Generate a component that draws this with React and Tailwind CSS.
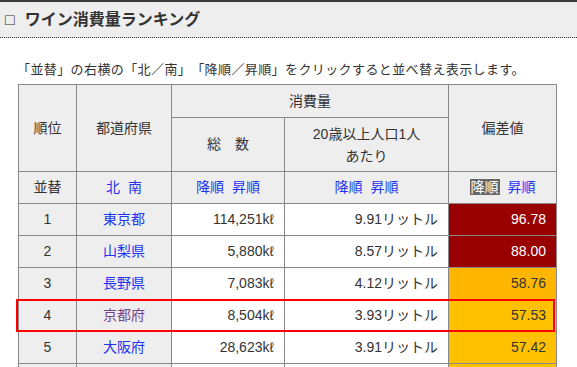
import React from "react";

const font = { fontFamily: '"Liberation Sans", "Noto Sans CJK JP", sans-serif' };

const rows = [
  { r: "1", p: "東京都", t: "114,251kℓ", a: "9.91リットル", d: "96.78", bg: "bg-[#990000] text-white" },
  { r: "2", p: "山梨県", t: "5,880kℓ", a: "8.57リットル", d: "88.00", bg: "bg-[#990000] text-white" },
  { r: "3", p: "長野県", t: "7,083kℓ", a: "4.12リットル", d: "58.76", bg: "bg-[#ffb600] text-[#333]" },
  { r: "4", p: "京都府", t: "8,504kℓ", a: "3.93リットル", d: "57.53", bg: "bg-[#ffc000] text-[#333]", visited: true },
  { r: "5", p: "大阪府", t: "28,623kℓ", a: "3.91リットル", d: "57.42", bg: "bg-[#ffc000] text-[#333]" },
];

export default function App() {
  return (
    <div className="w-[577px] h-[367px] overflow-hidden bg-white text-[#333]" style={font}>
      <div className="h-[2px] bg-[#3a3a3a]" />
      <div className="h-[36px] bg-[#eeeeee] border-b border-dotted border-[#333] flex items-center pl-[5px]">
        <span className="text-[16px] font-normal mr-[10px] leading-none">□</span>
        <span className="text-[16px] font-bold text-[#333] leading-none">ワイン消費量ランキング</span>
      </div>
      <div className="pl-[17px] pt-[22px] text-[13px] leading-[20px] h-[46px] tracking-[0.4px] [text-spacing-trim:space-all] whitespace-nowrap">
        「並替」の右横の「北／南」「降順／昇順」をクリックすると並べ替え表示します。
      </div>
      <div className="relative ml-[18px]">
        <table className="border-collapse text-[14px] table-fixed w-[539px]">
          <colgroup>
            <col className="w-[58px]" />
            <col className="w-[95px]" />
            <col className="w-[113px]" />
            <col className="w-[164px]" />
            <col className="w-[108px]" />
          </colgroup>
          <tbody>
            <tr className="h-[33px] bg-[#eeeeee]">
              <td rowSpan={2} className="border border-[#888] text-center align-middle">順位</td>
              <td rowSpan={2} className="border border-[#888] text-center align-middle">都道府県</td>
              <td colSpan={2} className="border border-[#888] text-center align-middle">消費量</td>
              <td rowSpan={2} className="border border-[#888] text-center align-middle">偏差値</td>
            </tr>
            <tr className="h-[54px] bg-[#eeeeee]">
              <td className="border border-[#888] text-center align-middle">総　数</td>
              <td className="border border-[#888] text-center align-middle leading-[22px]">
                20歳以上人口1人<br />あたり
              </td>
            </tr>
            <tr className="h-[32px] bg-[#eeeeee]">
              <td className="border border-[#888] text-center">並替</td>
              <td className="border border-[#888] text-center text-[#2233ee]">北&nbsp;&nbsp;南</td>
              <td className="border border-[#888] text-center text-[#2233ee]">降順&nbsp;&nbsp;昇順</td>
              <td className="border border-[#888] text-center text-[#2233ee]">降順&nbsp;&nbsp;昇順</td>
              <td className="border border-[#888] text-center">
                <span className="bg-[#666] text-white px-[1px]">降順</span>
                <span className="text-[#2233ee]">&nbsp;&nbsp;昇順</span>
              </td>
            </tr>
            {rows.map((row) => (
              <tr key={row.r} className="h-[32px]">
                <td className="border border-[#888] bg-[#eeeeee] text-center">{row.r}</td>
                <td className={`border border-[#888] bg-[#eeeeee] text-center ${row.visited ? "text-[#774488]" : "text-[#2233ee]"}`}>{row.p}</td>
                <td className="border border-[#888] bg-white text-right pr-[10px]">{row.t}</td>
                <td className="border border-[#888] bg-white text-right pr-[10px]">{row.a}</td>
                <td className={`border border-[#888] text-right pr-[10px] ${row.bg}`}>{row.d}</td>
              </tr>
            ))}
            <tr className="h-[32px]">
              <td className="border border-[#888] bg-[#eeeeee]" />
              <td className="border border-[#888] bg-[#eeeeee]" />
              <td className="border border-[#888] bg-white" />
              <td className="border border-[#888] bg-white" />
              <td className="border border-[#888] bg-[#ffc000]" />
            </tr>
          </tbody>
        </table>
        <div className="absolute left-[-2px] top-[215px] w-[539px] h-[33px] border-[2.5px] border-[#ff0000] pointer-events-none" />
      </div>
    </div>
  );
}
